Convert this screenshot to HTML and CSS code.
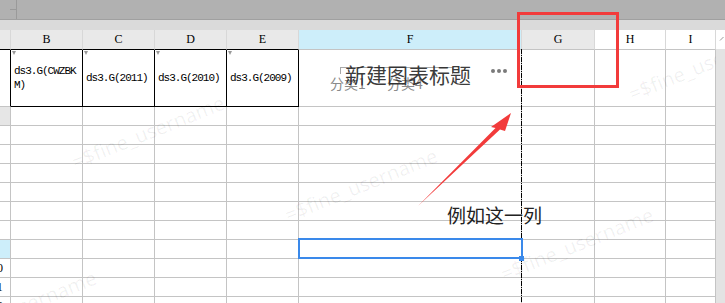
FILE: index.html
```html
<!DOCTYPE html>
<html lang="en">
<head>
    <meta charset="UTF-8">
    <title>Sheet</title>
    <link rel="stylesheet" href="styles.css">
</head>
<body>
    <div class="topbar">
        <div class="namebox"><span class="tick"></span></div>
        <div class="formula"></div>
    </div>
    <div class="strip"></div>

    <div class="sheet">
        <div class="grid">
            <div class="row head">
                <div class="c rh corner"><span class="lines"></span></div>
                <div class="c">B</div>
                <div class="c">C</div>
                <div class="c">D</div>
                <div class="c">E</div>
                <div class="c cur">F</div>
                <div class="c">G</div>
                <div class="c plain">H</div>
                <div class="c plain">I</div>
            </div>
            <div class="row r1">
                <div class="c rh"><span>1</span></div>
                <div class="c val">ds3.G(CWZBKM)</div>
                <div class="c val">ds3.G(2011)</div>
                <div class="c val">ds3.G(2010)</div>
                <div class="c val">ds3.G(2009)</div>
                <div class="c"></div>
                <div class="c"></div>
                <div class="c"></div>
                <div class="c"></div>
            </div>
            <div class="row">
                <div class="c rh gray"><span>2</span></div>
                <div class="c"></div><div class="c"></div><div class="c"></div><div class="c"></div>
                <div class="c"></div><div class="c"></div><div class="c"></div><div class="c"></div>
            </div>
            <div class="row">
                <div class="c rh"><span>3</span></div>
                <div class="c"></div><div class="c"></div><div class="c"></div><div class="c"></div>
                <div class="c"></div><div class="c"></div><div class="c"></div><div class="c"></div>
            </div>
            <div class="row">
                <div class="c rh"><span>4</span></div>
                <div class="c"></div><div class="c"></div><div class="c"></div><div class="c"></div>
                <div class="c"></div><div class="c"></div><div class="c"></div><div class="c"></div>
            </div>
            <div class="row">
                <div class="c rh"><span>5</span></div>
                <div class="c"></div><div class="c"></div><div class="c"></div><div class="c"></div>
                <div class="c"></div><div class="c"></div><div class="c"></div><div class="c"></div>
            </div>
            <div class="row">
                <div class="c rh"><span>6</span></div>
                <div class="c"></div><div class="c"></div><div class="c"></div><div class="c"></div>
                <div class="c"></div><div class="c"></div><div class="c"></div><div class="c"></div>
            </div>
            <div class="row">
                <div class="c rh"><span>7</span></div>
                <div class="c"></div><div class="c"></div><div class="c"></div><div class="c"></div>
                <div class="c"></div><div class="c"></div><div class="c"></div><div class="c"></div>
            </div>
            <div class="row">
                <div class="c rh"><span>8</span></div>
                <div class="c"></div><div class="c"></div><div class="c"></div><div class="c"></div>
                <div class="c"></div><div class="c"></div><div class="c"></div><div class="c"></div>
            </div>
            <div class="row">
                <div class="c rh cur"><span>9</span></div>
                <div class="c"></div><div class="c"></div><div class="c"></div><div class="c"></div>
                <div class="c"></div><div class="c"></div><div class="c"></div><div class="c"></div>
            </div>
            <div class="row">
                <div class="c rh"><span>10</span></div>
                <div class="c"></div><div class="c"></div><div class="c"></div><div class="c"></div>
                <div class="c"></div><div class="c"></div><div class="c"></div><div class="c"></div>
            </div>
            <div class="row">
                <div class="c rh"><span>11</span></div>
                <div class="c"></div><div class="c"></div><div class="c"></div><div class="c"></div>
                <div class="c"></div><div class="c"></div><div class="c"></div><div class="c"></div>
            </div>
            <div class="row">
                <div class="c rh"><span>12</span></div>
                <div class="c"></div><div class="c"></div><div class="c"></div><div class="c"></div>
                <div class="c"></div><div class="c"></div><div class="c"></div><div class="c"></div>
            </div>
        </div>
        <div class="vscroll">
            <div class="vscroll-top">
                <svg width="9" height="19" viewBox="0 0 9 19"><path d="M4 10.5 L7.5 7" stroke="#9a9a9a" stroke-width="1"/></svg>
            </div>
        </div>
    </div>

    <!-- watermark layer -->
    <div class="marks">
        <span class="mark" style="left:137px; top:82px">=$fine_username</span>
        <span class="mark" style="left:350px; top:135px">=$fine_username</span>
        <span class="mark" style="left:566px; top:194px">=$fine_username</span>
        <span class="mark" style="left:694px; top:14px">=$fine_username</span>
        <span class="mark" style="left:9px; top:257px">=$fine_username</span>
    </div>

    <!-- chart placeholder sitting on column F -->
    <div class="chart-box"></div>
    <div class="chart-cat cat1">分类1</div>
    <div class="chart-cat cat2">分类4</div>
    <div class="chart-title">新建图表标题</div>
    <div class="chart-more"><i></i><i></i><i></i></div>

    <div class="col-split"></div>

    <div class="selection"><span class="handle"></span></div>

    <!-- annotation -->
    <div class="note-box"></div>
    <svg class="note-arrow" width="725" height="303" viewBox="0 0 725 303">
        <polygon points="511,113 491,127 495.5,128 418,206 500,129.6 505,131" fill="#f23b3b"/>
    </svg>
    <div class="note-text">例如这一列</div>
</body>
</html>
```

FILE: styles.css
```css
* {
    box-sizing: border-box;
}
body {
    margin: 0;
    width: 725px;
    height: 303px;
    overflow: hidden;
    position: relative;
    background: #fff;
    font-family: "Liberation Mono", monospace;
    color: #1b1b1b;
}

/* top bars */
.topbar {
    display: flex;
    height: 20px;
    background: #b1b1b1;
    border-bottom: 1px solid #a0a0a0;
}
.namebox {
    width: 17px;
    border-right: 1px solid #9a9a9a;
}
.namebox .tick {
    display: block;
    width: 6px;
    height: 1px;
    margin: 9px 0 0 10px;
    background: #9a9a9a;
}
.formula {
    flex: 1;
}
.strip {
    height: 10px;
    background: #dadada;
}

/* sheet grid */
.sheet {
    display: flex;
}
.grid {
    width: 716px;
}
.row {
    display: grid;
    grid-template-columns: 11px 72px 72px 72px 72px 223px 73px 71px 50px;
    height: 19px;
}
.c {
    border-right: 1px solid #c4c4c4;
    border-bottom: 1px solid #c4c4c4;
    overflow: hidden;
    position: relative;
}
.head {
    height: 20px;
}
.head .c {
    background: #e9e9e9;
    border-right-color: #d8d8d8;
    text-align: center;
    font-family: "Liberation Serif", serif;
    font-size: 12px;
    line-height: 19px;
    color: #000;
}
.head .c:nth-child(-n+5) {
    border-bottom-color: #000;
}
.head .c.cur {
    background: #cdeefa;
}
.head .c.plain {
    background: #fff;
}
.corner .lines {
    display: block;
    width: 3px;
    height: 7px;
    margin-top: 8px;
    background: repeating-linear-gradient(#9a9a9a 0 1px, transparent 1px 3px);
}

.rh {
    font-family: "Liberation Serif", serif;
    font-size: 12px;
    color: #000;
}
.rh span {
    display: block;
    width: 26px;
    margin-left: -16px;
    text-align: center;
    line-height: 18px;
}
.rh.gray {
    background: #e6e6e6;
}
.rh.cur {
    background: #cdeefa;
}

.r1 {
    height: 57px;
}
.r1 .c:nth-child(-n+5) {
    border-right-color: #000;
}
.r1 .c:nth-child(n+2):nth-child(-n+5) {
    border-bottom-color: #000;
}
.r1 .rh span {
    line-height: 56px;
}
.val {
    display: flex;
    align-items: center;
    padding: 0 3px;
    font-size: 11px;
    letter-spacing: -1px;
    line-height: 14px;
    word-break: break-all;
    color: #000;
}
.val::before {
    content: "";
    position: absolute;
    left: 1px;
    top: 1px;
    width: 0;
    height: 0;
    border-left: 2px solid transparent;
    border-right: 2px solid transparent;
    border-top: 4px solid #999;
}

.vscroll {
    width: 9px;
    height: 273px;
    background: #e3e3e3;
}
.vscroll-top {
    height: 19px;
    background: #fff;
}
.vscroll-top svg {
    display: block;
}

/* watermark */
.marks {
    position: absolute;
    left: 11px;
    top: 50px;
    width: 705px;
    height: 253px;
    overflow: hidden;
    pointer-events: none;
}
.mark {
    position: absolute;
    transform: translate(-50%, -50%) rotate(-22deg);
    font-family: "Noto Sans", sans-serif;
    font-size: 20px;
    white-space: nowrap;
    color: rgba(0, 0, 0, 0.06);
}

/* chart placeholder */
.chart-box {
    position: absolute;
    left: 340px;
    top: 67px;
    width: 113px;
    height: 7px;
    border: 1px solid #a8a8a8;
    border-bottom: none;
}
.chart-cat {
    position: absolute;
    top: 75px;
    font-family: "Noto Sans CJK SC", sans-serif;
    font-size: 14px;
    line-height: 16px;
    color: #8a8a8a;
}
.cat1 {
    left: 330px;
}
.cat2 {
    left: 387px;
}
.chart-title {
    position: absolute;
    left: 345px;
    top: 62px;
    font-family: "Noto Sans CJK SC", sans-serif;
    font-size: 21px;
    line-height: 24px;
    color: rgba(40, 40, 40, 0.92);
}
.chart-more {
    position: absolute;
    left: 491px;
    top: 69px;
    display: flex;
    gap: 2px;
}
.chart-more i {
    width: 4px;
    height: 4px;
    border-radius: 50%;
    background: #7a7a7a;
}

.col-split {
    position: absolute;
    left: 521px;
    top: 49px;
    width: 1px;
    height: 254px;
    background: repeating-linear-gradient(to bottom, #000 0 5px, transparent 5px 6px, #000 6px 7px, transparent 7px 8px);
}

.selection {
    position: absolute;
    left: 298px;
    top: 238px;
    width: 225px;
    height: 21px;
    border: 2px solid #3a89ea;
}
.selection .handle {
    position: absolute;
    right: -3px;
    bottom: -4px;
    width: 5px;
    height: 5px;
    background: #3a89ea;
}

/* annotation */
.note-box {
    position: absolute;
    left: 517px;
    top: 12px;
    width: 102px;
    height: 76px;
    border: 3px solid #f23b3b;
}
.note-arrow {
    position: absolute;
    left: 0;
    top: 0;
}
.note-text {
    position: absolute;
    left: 447px;
    top: 203px;
    font-family: "Noto Sans CJK SC", sans-serif;
    font-size: 19px;
    line-height: 24px;
    color: #222;
}
```
